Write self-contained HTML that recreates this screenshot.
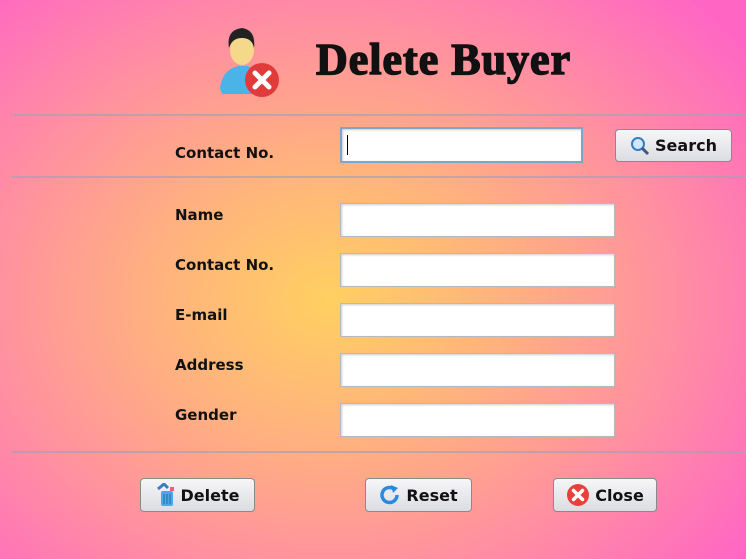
<!DOCTYPE html>
<html><head><style>
body{margin:0;width:746px;height:559px;overflow:hidden;position:relative;font-family:"Liberation Sans","DejaVu Sans",sans-serif;
background:radial-gradient(ellipse 520px 420px at 330px 300px,#ffd060 0%,#ffb080 35%,#ff90a0 65%,#ff66c4 100%);}
.hr{position:absolute;left:12px;width:734px;height:0;border-top:2px solid rgba(170,160,180,0.7);}
.lbl{position:absolute;left:175px;font-weight:bold;font-size:15px;color:#111;font-family:"DejaVu Sans",sans-serif;}
.in{position:absolute;left:340px;width:275px;height:34px;background:#fff;border:1px solid #b8b8c0;box-shadow:inset 1px 1px 2px #ccc;box-sizing:border-box}
.btn{position:absolute;height:34px;box-sizing:border-box;border:1px solid #8a8a8a;border-radius:4px;background:linear-gradient(#f6f6f8,#dcdde2);font-family:"DejaVu Sans",sans-serif;font-weight:bold;font-size:16px;display:flex;align-items:center;justify-content:center;gap:5px;color:#111}
</style></head><body>
<svg style="position:absolute;left:216px;top:24px" width="68" height="76" viewBox="0 0 68 76">
<path d="M4 64 Q6 46 22 42 L32 42 Q40 46 42 56 L40 70 L6 70 Z" fill="#4ab4e8"/>
<ellipse cx="26" cy="26" rx="12" ry="15" fill="#f6d88a"/>
<path d="M13 24 Q10 6 26 4 Q40 6 38 24 Q36 14 26 14 Q16 14 13 24Z" fill="#222"/>
<circle cx="46" cy="56" r="17" fill="#e03a3a"/>
<path d="M39 49 L53 63 M53 49 L39 63" stroke="#fff" stroke-width="5" stroke-linecap="round"/>
</svg>
<div style="position:absolute;left:316px;top:34px;font-family:'Liberation Serif',serif;font-weight:bold;font-size:44px;color:#111;letter-spacing:1px;-webkit-text-stroke:1.5px #111">Delete Buyer</div>
<div class="hr" style="top:114px"></div>
<div class="lbl" style="top:144px">Contact No.</div>
<div class="in" style="top:127px;width:243px;height:36px;border:2px solid #7fa6c8"><div style="position:absolute;left:5px;top:6px;width:1px;height:20px;background:#000"></div></div>
<div class="btn" style="left:615px;top:129px;width:117px;height:33px"><svg width="20" height="20"><circle cx="8" cy="8" r="6" fill="#cfe8ff" stroke="#3a7cc0" stroke-width="2"/><path d="M12 12 L18 18" stroke="#3a5a80" stroke-width="3"/></svg>Search</div>
<div class="hr" style="top:176px"></div>
<div class="lbl" style="top:206px">Name</div>
<div class="lbl" style="top:256px">Contact No.</div>
<div class="lbl" style="top:306px">E-mail</div>
<div class="lbl" style="top:356px">Address</div>
<div class="lbl" style="top:406px">Gender</div>
<div class="in" style="top:203px"></div>
<div class="in" style="top:253px"></div>
<div class="in" style="top:303px"></div>
<div class="in" style="top:353px"></div>
<div class="in" style="top:403px"></div>
<div class="hr" style="top:451px"></div>
<div class="btn" style="left:140px;top:478px;width:115px"><svg width="20" height="24"><rect x="5" y="8" width="12" height="15" rx="2" fill="#4aa8e8"/><path d="M8 11v10M11 11v10M14 11v10" stroke="#2a6aa0"/><path d="M2 6 L8 1 L12 5" stroke="#3a7cc0" stroke-width="3" fill="none"/><rect x="14" y="4" width="4" height="4" fill="#e86080"/></svg>Delete</div>
<div class="btn" style="left:365px;top:478px;width:107px"><svg width="22" height="22"><path d="M18 11 A7.5 7.5 0 1 1 15 5" stroke="#2a8ae0" stroke-width="3.5" fill="none"/><path d="M12 1 L19 4 L14 9Z" fill="#2a8ae0"/></svg>Reset</div>
<div class="btn" style="left:553px;top:478px;width:104px"><svg width="24" height="24"><circle cx="12" cy="12" r="11" fill="#e8403a"/><path d="M7.5 7.5 L16.5 16.5 M16.5 7.5 L7.5 16.5" stroke="#fff" stroke-width="3.5" stroke-linecap="round"/></svg>Close</div>
</body></html>
